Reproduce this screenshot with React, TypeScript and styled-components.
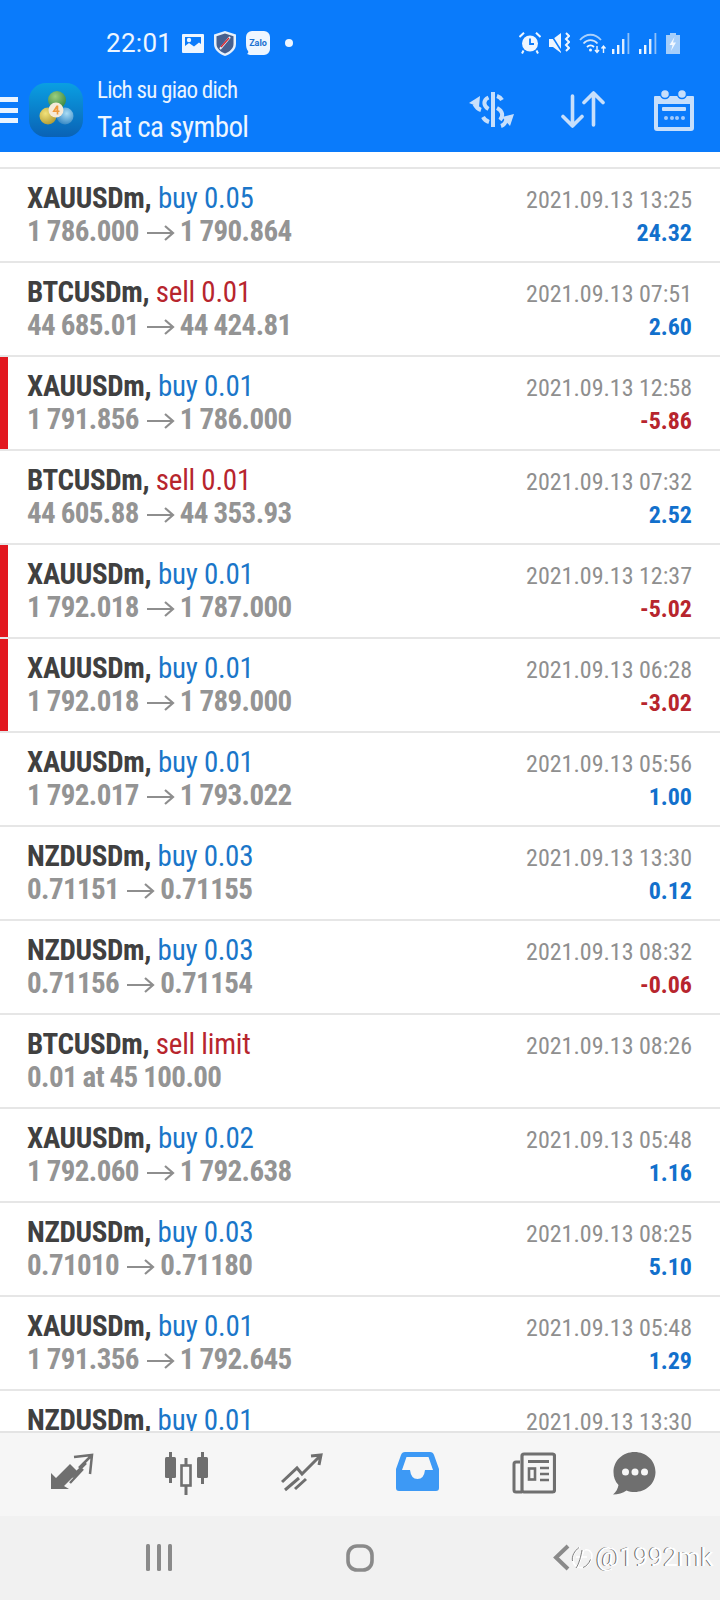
import React from "react";
import styled, { createGlobalStyle } from "styled-components";

const Global = createGlobalStyle`
  html, body { margin: 0; padding: 0; background: #fff; }
  body { font-family: Roboto, "Liberation Sans", sans-serif; }
`;

const Screen = styled.div`
  width: 720px;
  height: 1600px;
  display: flex;
  flex-direction: column;
  overflow: hidden;
`;

const Header = styled.header`
  flex: 0 0 152px;
  background: #0a7bfb;
  color: #fff;
  display: flex;
  flex-direction: column;
`;

const StatusBar = styled.div`
  flex: 0 0 75px;
  display: flex;
  align-items: center;
  padding: 11px 40px 0 106px;
  box-sizing: border-box;
`;

const Clock = styled.span`
  font-size: 26px;
  letter-spacing: 0.3px;
  width: 76px;
  color: #eef6ff;
`;

const Glyph = styled.svg<{ $l?: number }>`
  display: block;
  flex: none;
  margin-left: ${(p) => p.$l ?? 0}px;
`;

const Spacer = styled.div`
  flex: 1;
`;

const AppBar = styled.div`
  flex: 1;
  display: flex;
  align-items: center;
  padding-bottom: 7px;
`;

const Hamburger = styled.div`
  width: 18px;
  height: 26px;
  display: flex;
  flex-direction: column;
  justify-content: space-between;
`;

const HamburgerBar = styled.span`
  height: 5px;
  background: #eaf4ff;
`;

const Title = styled.div`
  align-self: flex-start;
  margin-left: 14px;
  padding-top: 1px;
  font-stretch: 75%;
  display: flex;
  flex-direction: column;
`;

const TitleSmall = styled.span`
  font-size: 23px;
  line-height: 30px;
  letter-spacing: -0.75px;
  color: #eaf4ff;
`;

const TitleLarge = styled.span`
  font-size: 29px;
  line-height: 36px;
  margin-top: 3px;
  letter-spacing: -0.6px;
  color: #eef6ff;
`;

const Actions = styled.div`
  margin-left: auto;
  display: flex;
  align-items: center;
  padding-right: 26px;
`;

const List = styled.main`
  flex: 1;
  overflow: hidden;
  padding-top: 15px;
`;

const Row = styled.div<{ $loss?: boolean }>`
  height: 92px;
  border-top: 2px solid #e6e6e6;
  display: flex;
  justify-content: space-between;
  padding: 0 28px 0 27px;
  position: relative;
  ${(p) =>
    p.$loss &&
    `&::before { content: ""; position: absolute; left: 0; top: 0; bottom: 0; width: 8px; background: #e2171f; }`}
`;

const Col = styled.div<{ $right?: boolean }>`
  display: flex;
  flex-direction: column;
  padding-top: 13px;
  align-items: ${(p) => (p.$right ? "flex-end" : "flex-start")};
  font-stretch: 75%;
`;

const Line1 = styled.div`
  font-size: 29px;
  line-height: 33px;
  white-space: nowrap;
`;

const Symbol = styled.span`
  font-weight: 700;
  color: #404040;
  letter-spacing: -0.35px;
`;

const Side = styled.span<{ $sell?: boolean }>`
  color: ${(p) => (p.$sell ? "#b7252d" : "#1a76c9")};
  letter-spacing: -0.25px;
`;

const Prices = styled.div`
  font-size: 29px;
  line-height: 33px;
  font-weight: 700;
  color: #949494;
  white-space: nowrap;
  letter-spacing: -0.6px;
  word-spacing: -0.5px;
  display: flex;
  align-items: center;
`;

const ArrowGlyph = styled.svg`
  display: block;
  flex: none;
  margin: 2px 5px 0 8px;
`;

const DateText = styled.div`
  font-size: 24px;
  line-height: 30px;
  margin-top: 3px;
  color: #8f8f8f;
  white-space: nowrap;
`;

const Profit = styled.div<{ $neg?: boolean }>`
  font-size: 24px;
  line-height: 30px;
  margin-top: 3px;
  font-weight: 700;
  color: ${(p) => (p.$neg ? "#b7252d" : "#1270cc")};
`;

const TabBar = styled.nav`
  flex: 0 0 85px;
  background: #f6f6f6;
  border-top: 2px solid #e4e4e4;
  box-sizing: border-box;
  display: flex;
  align-items: flex-start;
  padding: 19px 0 0 50px;
`;

const SystemBar = styled.div`
  flex: 0 0 84px;
  background: #f1f1f1;
  position: relative;
  display: flex;
  align-items: center;
  padding: 0 0 1px 146px;
  box-sizing: border-box;
`;

const Watermark = styled.div`
  position: absolute;
  left: 571px;
  top: 24px;
  display: flex;
  align-items: center;
  gap: 2px;
`;

const WatermarkText = styled.span`
  font-size: 26px;
  line-height: 34px;
  font-weight: 400;
  color: #fff;
  text-shadow: -1px -0.4px 0 #5f5f5f;
  white-space: nowrap;
`;

type R = { s: string; side: string; from?: string; to?: string; text?: string; d: string; v?: string; loss?: boolean };
const rows: R[] = [
  { s: "XAUUSDm", side: "buy 0.05", from: "1 786.000", to: "1 790.864", d: "2021.09.13 13:25", v: "24.32" },
  { s: "BTCUSDm", side: "sell 0.01", from: "44 685.01", to: "44 424.81", d: "2021.09.13 07:51", v: "2.60" },
  { s: "XAUUSDm", side: "buy 0.01", from: "1 791.856", to: "1 786.000", d: "2021.09.13 12:58", v: "-5.86", loss: true },
  { s: "BTCUSDm", side: "sell 0.01", from: "44 605.88", to: "44 353.93", d: "2021.09.13 07:32", v: "2.52" },
  { s: "XAUUSDm", side: "buy 0.01", from: "1 792.018", to: "1 787.000", d: "2021.09.13 12:37", v: "-5.02", loss: true },
  { s: "XAUUSDm", side: "buy 0.01", from: "1 792.018", to: "1 789.000", d: "2021.09.13 06:28", v: "-3.02", loss: true },
  { s: "XAUUSDm", side: "buy 0.01", from: "1 792.017", to: "1 793.022", d: "2021.09.13 05:56", v: "1.00" },
  { s: "NZDUSDm", side: "buy 0.03", from: "0.71151", to: "0.71155", d: "2021.09.13 13:30", v: "0.12" },
  { s: "NZDUSDm", side: "buy 0.03", from: "0.71156", to: "0.71154", d: "2021.09.13 08:32", v: "-0.06" },
  { s: "BTCUSDm", side: "sell limit", text: "0.01 at 45 100.00", d: "2021.09.13 08:26" },
  { s: "XAUUSDm", side: "buy 0.02", from: "1 792.060", to: "1 792.638", d: "2021.09.13 05:48", v: "1.16" },
  { s: "NZDUSDm", side: "buy 0.03", from: "0.71010", to: "0.71180", d: "2021.09.13 08:25", v: "5.10" },
  { s: "XAUUSDm", side: "buy 0.01", from: "1 791.356", to: "1 792.645", d: "2021.09.13 05:48", v: "1.29" },
  { s: "NZDUSDm", side: "buy 0.01", d: "2021.09.13 13:30" },
];

const ACT = "#c7dffb";
const TAB = "#6f6f6f";

const PriceArrow = () => (
  <ArrowGlyph width="28" height="18" viewBox="0 0 28 18" fill="none" stroke="#8e8e8e" strokeWidth="2.2">
    <path d="M0 9H26M18 2l8 7-8 7" />
  </ArrowGlyph>
);

const MtLogo = () => (
  <Glyph $l={11} width="54" height="54" viewBox="0 0 54 54">
    <defs>
      <linearGradient id="mtbg" x1="0" y1="0" x2="0" y2="1">
        <stop offset="0" stopColor="#0a9fe2" />
        <stop offset="1" stopColor="#0a62b5" />
      </linearGradient>
      <radialGradient id="mtgreen" cx="0.4" cy="0.3" r="0.8">
        <stop offset="0" stopColor="#9ccf7e" />
        <stop offset="1" stopColor="#2f7f3c" />
      </radialGradient>
      <radialGradient id="mtyellow" cx="0.35" cy="0.35" r="0.8">
        <stop offset="0" stopColor="#f2e27a" />
        <stop offset="1" stopColor="#a8922a" />
      </radialGradient>
      <radialGradient id="mtblue" cx="0.6" cy="0.35" r="0.8">
        <stop offset="0" stopColor="#a9dcf5" />
        <stop offset="1" stopColor="#1f78bb" />
      </radialGradient>
    </defs>
    <rect width="54" height="54" rx="17" fill="url(#mtbg)" />
    <circle cx="28" cy="17" r="9" fill="url(#mtgreen)" />
    <circle cx="19" cy="33" r="8.500" fill="url(#mtyellow)" />
    <circle cx="36" cy="33" r="8.500" fill="url(#mtblue)" />
    <circle cx="27" cy="27" r="7.500" fill="#f5ead8" />
    <path d="M27.500 22.500l-4.200 6.500h4.400v2.500h1.600V29h1.200v-1.600h-1.200v-4.900zm-.1 3.200v1.700h-1.200z" fill="#ef9a3c" />
  </Glyph>
);

const ImageIcon = () => (
  <Glyph width="22" height="19" viewBox="0 0 22 19">
    <path fillRule="evenodd" d="M1 0h20a1 1 0 011 1v17a1 1 0 01-1 1H1a1 1 0 01-1-1V1a1 1 0 011-1zm2 3v9l4-3 5 3.500 5-4 2 1.500V3z" fill="#eef6ff" />
    <circle cx="7" cy="6" r="2.200" fill="#eef6ff" />
  </Glyph>
);

const ShieldIcon = () => (
  <Glyph $l={10} width="22" height="25" viewBox="0 0 22 25">
    <path d="M11 0l11 3.500V13c0 6-5.500 10-11 12C5.500 23 0 19 0 13V3.500z" fill="#e6f0fb" />
    <path d="M11 2.500l8.500 2.700V13c0 4.600-4 7.800-8.500 9.500C6.500 20.800 2.500 17.600 2.500 13V5.200z" fill="#47608f" />
    <path d="M16 6L6 18" stroke="#e8f0fa" strokeWidth="2" />
    <path d="M15 7L7 16" stroke="#d9252f" strokeWidth="1.300" />
  </Glyph>
);

const ZaloIcon = () => (
  <Glyph $l={10} width="24" height="24" viewBox="0 0 24 24">
    <path d="M6 0h12a6 6 0 016 6v12a6 6 0 01-6 6H7c-2 0-4 0-6-1 1.500-1 1.500-2 1-3-1.500-2-2-4-2-8V6a6 6 0 016-6z" fill="#eef6ff" />
    <text x="12" y="15" textAnchor="middle" fontSize="9" fontWeight="700" fontFamily="Roboto, sans-serif" fill="#1a6fd0">
      Zalo
    </text>
  </Glyph>
);

const Dot = () => (
  <Glyph $l={15} width="8" height="8" viewBox="0 0 8 8">
    <circle cx="4" cy="4" r="4" fill="#eef6ff" />
  </Glyph>
);

const AlarmIcon = () => (
  <Glyph width="22" height="22" viewBox="0 0 22 22">
    <circle cx="11" cy="11.500" r="8" fill="#eef6ff" />
    <path d="M11 6.500v5.500h4" stroke="#0a7bfb" strokeWidth="1.800" fill="none" />
    <path d="M0.500 5L5 0.800M21.500 5L17 0.800M4.500 18.500L3 21.500M17.500 18.500L19 21.500" stroke="#eef6ff" strokeWidth="2" />
  </Glyph>
);

const MuteIcon = () => (
  <Glyph $l={8} width="21" height="22" viewBox="0 0 21 22">
    <path d="M0 7h4l8-6v20l-8-6H0z" fill="#eef6ff" />
    <path d="M1 1l12 19" stroke="#0a7bfb" strokeWidth="1.500" />
    <path d="M17 1l3 3-3 3 3 3-3 3 3 3-3 3" stroke="#eef6ff" strokeWidth="2" fill="none" />
  </Glyph>
);

const WifiIcon = () => (
  <Glyph $l={9} width="28" height="21" viewBox="0 0 28 21" fill="none">
    <path d="M1 7c6-7 15-7 21 0" stroke="#a9d0fb" strokeWidth="1.800" />
    <path d="M4.500 10.500c4-4.500 10-4.500 14 0" stroke="#cfe4fc" strokeWidth="1.800" />
    <path d="M8 14c2-2 5-2 7 0" stroke="#eef6ff" strokeWidth="1.800" />
    <circle cx="11.500" cy="17" r="1.500" fill="#eef6ff" />
    <path d="M18 13v6M16 17l2 2.500 2-2.500" stroke="#eef6ff" strokeWidth="1.400" />
    <path d="M24.500 20v-7M22.500 15.500l2-2.500 2 2.500" stroke="#eef6ff" strokeWidth="1.400" />
  </Glyph>
);

const Signal = ({ l }: { l: number }) => (
  <Glyph $l={l} width="18" height="21" viewBox="0 0 18 21">
    <rect x="0" y="16" width="2.400" height="5" fill="#eef6ff" />
    <rect x="5" y="12" width="2.400" height="9" fill="#eef6ff" />
    <rect x="10" y="6" width="2.400" height="15" fill="#dcebfd" />
    <rect x="15.500" y="0" width="1.800" height="21" fill="#8fc0f8" />
  </Glyph>
);

const BatteryIcon = () => (
  <Glyph $l={9} width="14" height="21" viewBox="0 0 14 21">
    <path d="M4 0h6v2h4v19H0V2h4z" fill="#a5cefa" />
    <path d="M8.500 4L3.500 12h3l-1.500 6 5-8.500H7z" fill="#f2f8ff" />
  </Glyph>
);

const DollarSwap = () => (
  <Glyph width="47" height="38" viewBox="0 0 47 38" fill="none" stroke={ACT} strokeWidth="4">
    <rect x="23" y="1" width="4" height="35" fill={ACT} stroke="none" />
    <path d="M20.500 6.500C15 9 15 15 20.500 18M29 5c2 .6 4 2 5 4M15 26c1 2 3 4 6 5M29 17c6 3 6.500 8 3 12" />
    <path d="M13 19C10 18 8 16 6.500 13" />
    <path d="M12 5L1 12l10 4z" fill={ACT} stroke="none" />
    <path d="M33 35c3-1 5-4 6-8" />
    <path d="M34 26l12-3-4 12z" fill={ACT} stroke="none" />
  </Glyph>
);

const SortArrows = () => (
  <Glyph $l={46} width="44" height="38" viewBox="0 0 44 38" fill="none" stroke={ACT} strokeWidth="3.600" strokeLinecap="round" strokeLinejoin="round">
    <path d="M11.500 5v30M2 25.500l9.500 9.500 9.500-9.500" />
    <path d="M32.500 34V2M23 11.500L32.500 2 42 11.500" />
  </Glyph>
);

const CalendarIcon = () => (
  <Glyph $l={49} width="40" height="42" viewBox="0 0 40 42">
    <path
      fillRule="evenodd"
      d="M3 7h36a1 1 0 011 1v31a3 3 0 01-3 3H3a3 3 0 01-3-3V8a1 1 0 011-1zm1 8v23h32V15z"
      fill={ACT}
    />
    <circle cx="11" cy="5" r="4.500" fill={ACT} stroke="#0a7bfb" strokeWidth="1.500" />
    <circle cx="28" cy="5" r="4.500" fill={ACT} stroke="#0a7bfb" strokeWidth="1.500" />
    <rect x="8" y="18" width="24" height="4" rx="1" fill={ACT} />
    <circle cx="12" cy="29" r="2" fill={ACT} opacity="0.8" />
    <circle cx="18" cy="29" r="2" fill={ACT} opacity="0.8" />
    <circle cx="23" cy="29" r="2" fill={ACT} opacity="0.8" />
    <circle cx="29" cy="29" r="2" fill={ACT} opacity="0.8" />
  </Glyph>
);

const TradeTab = () => (
  <Glyph width="44" height="39" viewBox="0 0 44 39" fill="none">
    <path d="M1 37V21l5 5 14-14 8 8-14 14 5 3z" fill={TAB} />
    <path d="M24 5l18-2-2 19M41 4L29 16M36 11L22 25M33 17L20 31" stroke={TAB} strokeWidth="2.500" />
  </Glyph>
);

const CandlesTab = () => (
  <Glyph $l={70} width="45" height="43" viewBox="0 0 45 43" fill="none" stroke={TAB}>
    <path d="M6.500 0v31M38.500 0v32M22 6v37" strokeWidth="3" />
    <rect x="1" y="5" width="11" height="21" rx="1.500" fill={TAB} stroke="none" />
    <rect x="33" y="5" width="11" height="21" rx="1.500" fill={TAB} stroke="none" />
    <rect x="17.500" y="13.500" width="9" height="20" fill="#f6f6f6" strokeWidth="2.600" />
  </Glyph>
);

const TrendTab = () => (
  <Glyph $l={72} width="42" height="40" viewBox="0 0 42 40" fill="none" stroke={TAB} strokeWidth="3">
    <path d="M1 30l15-14 5 6L40 3M30 4l10-1-2 10M4 38L18 26M14 37l11-10" />
  </Glyph>
);

const InboxTab = () => (
  <Glyph $l={73} width="43" height="39" viewBox="0 0 43 39">
    <path
      fillRule="evenodd"
      fill="#3d99f5"
      d="M9 0h25q3 0 4 3l5 14v19q0 3-3 3H3q-3 0-3-3V17L5 3q1-3 4-3zm1.500 5L6 18h8q1 9 7.500 9t7.500-9h8L32.500 5z"
    />
  </Glyph>
);

const NewsTab = () => (
  <Glyph $l={73} width="44" height="42" viewBox="0 0 44 42" fill="none" stroke={TAB}>
    <path d="M8 10H4q-2 0-2 2v26q0 2 2 2h6" strokeWidth="3" />
    <rect x="10" y="2" width="32.500" height="38" rx="2" strokeWidth="3.200" />
    <path d="M16 9.500h21" strokeWidth="3" />
    <rect x="17" y="16.500" width="6" height="11" strokeWidth="2.600" />
    <path d="M28 16h9M28 22h9M28 28h9" strokeWidth="2.600" />
  </Glyph>
);

const ChatTab = () => (
  <Glyph $l={57} width="43" height="43" viewBox="0 0 43 43">
    <path d="M21.500 0C33 0 42.500 8.500 42.500 20S33 40 21.500 40c-3 0-5.500-.5-8-1.500C10 41 5 42.500 0 42.500c3-2.500 5-6 5.500-9.500C2 29.500.5 25 .5 20 .5 8.500 10 0 21.500 0z" fill={TAB} />
    <circle cx="12.500" cy="20" r="3.500" fill="#f6f6f6" />
    <circle cx="22" cy="20" r="3.500" fill="#f6f6f6" />
    <circle cx="31.500" cy="20" r="3.500" fill="#f6f6f6" />
  </Glyph>
);

const RecentsKey = () => (
  <Glyph width="26" height="27" viewBox="0 0 26 27" fill="#8a8a8a">
    <rect x="0" y="0" width="4" height="27" rx="1.500" />
    <rect x="11" y="0" width="4" height="27" rx="1.500" />
    <rect x="22" y="0" width="4" height="27" rx="1.500" />
  </Glyph>
);

const HomeKey = () => (
  <Glyph $l={174} width="28" height="28" viewBox="0 0 28 28" fill="none">
    <rect x="2" y="2" width="24" height="24" rx="9" stroke="#8a8a8a" strokeWidth="3.600" />
  </Glyph>
);

const BackKey = () => (
  <Glyph $l={179} width="17" height="27" viewBox="0 0 17 27" fill="none">
    <path d="M15 2L3 13.500 15 25" stroke="#8a8a8a" strokeWidth="4" />
  </Glyph>
);

const WeiboMark = () => (
  <svg width="23" height="28" viewBox="0 0 23 28" fill="none">
    <path d="M9 4C4 8 1 13 2 18c1 5 6 8 11 6 5-2 8-7 8-11 0-4-3-7-7-6M5 14h11M13 7c-2 5-3 10-7 18" stroke="#fff" strokeWidth="1.600" />
    <path d="M8 4.500C3.500 8 .5 13 1.500 18M12 24.500c3-1 6-4 7.500-8M5 25c3-4 5-12 6-18" stroke="#5f5f5f" strokeWidth="0.800" />
  </svg>
);

export default function App() {
  return (
    <Screen>
      <Global />
      <Header>
        <StatusBar>
          <Clock>22:01</Clock>
          <ImageIcon />
          <ShieldIcon />
          <ZaloIcon />
          <Dot />
          <Spacer />
          <AlarmIcon />
          <MuteIcon />
          <WifiIcon />
          <Signal l={5} />
          <Signal l={9} />
          <BatteryIcon />
        </StatusBar>
        <AppBar>
          <Hamburger>
            <HamburgerBar />
            <HamburgerBar />
            <HamburgerBar />
          </Hamburger>
          <MtLogo />
          <Title>
            <TitleSmall>Lich su giao dich</TitleSmall>
            <TitleLarge>Tat ca symbol</TitleLarge>
          </Title>
          <Actions>
            <DollarSwap />
            <SortArrows />
            <CalendarIcon />
          </Actions>
        </AppBar>
      </Header>
      <List>
        {rows.map((r, i) => (
          <Row key={i} $loss={r.loss}>
            <Col>
              <Line1>
                <Symbol>{r.s},</Symbol> <Side $sell={r.side.startsWith("sell")}>{r.side}</Side>
              </Line1>
              {r.text && <Prices>{r.text}</Prices>}
              {r.from && (
                <Prices>
                  {r.from}
                  <PriceArrow />
                  {r.to}
                </Prices>
              )}
            </Col>
            <Col $right>
              <DateText>{r.d}</DateText>
              {r.v && <Profit $neg={r.v.startsWith("-")}>{r.v}</Profit>}
            </Col>
          </Row>
        ))}
      </List>
      <TabBar>
        <TradeTab />
        <CandlesTab />
        <TrendTab />
        <InboxTab />
        <NewsTab />
        <ChatTab />
      </TabBar>
      <SystemBar>
        <RecentsKey />
        <HomeKey />
        <BackKey />
        <Watermark>
          <WeiboMark />
          <WatermarkText>@1992mk</WatermarkText>
        </Watermark>
      </SystemBar>
    </Screen>
  );
}
